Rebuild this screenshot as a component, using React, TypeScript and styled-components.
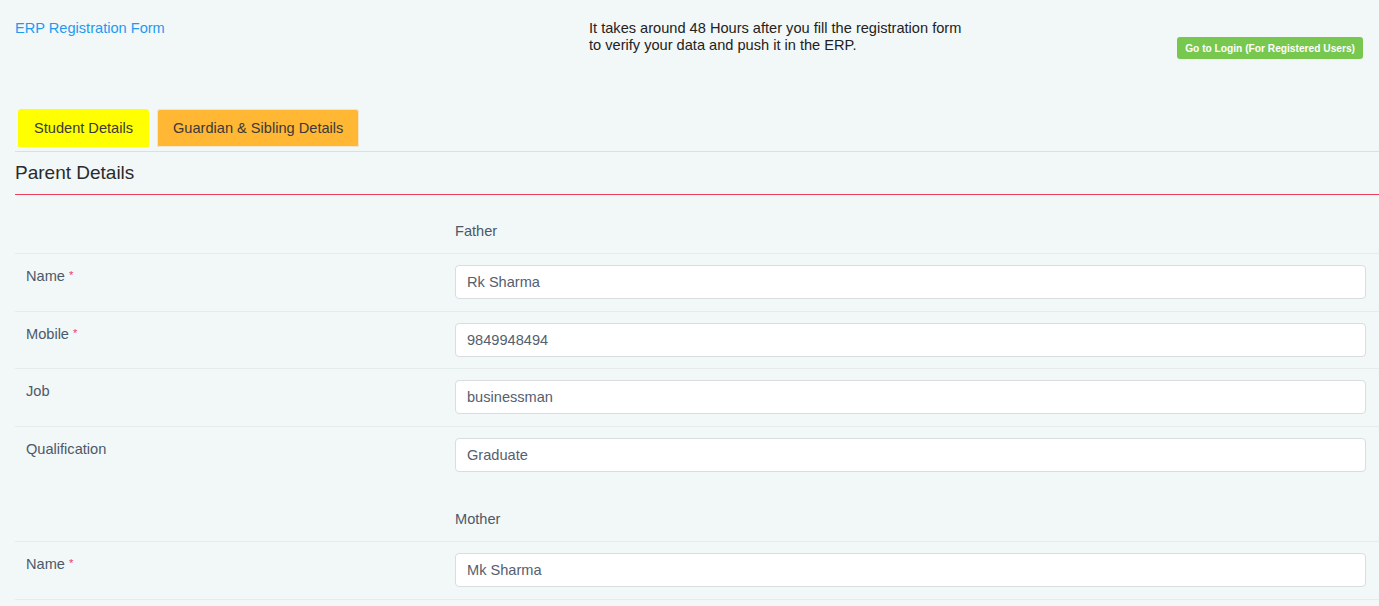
import React from "react";
import styled, { createGlobalStyle } from "styled-components";

const Global = createGlobalStyle`
  html, body { margin: 0; padding: 0; }
  body {
    background: #f2f7f8;
    font-family: "Liberation Sans", Arial, sans-serif;
    font-size: 14.6px;
    color: #333;
  }
`;

const Page = styled.div`
  padding-left: 15px;
  height: 606px;
  overflow: hidden;
`;

const TopBar = styled.header`
  display: grid;
  grid-template-columns: 574px 1fr auto;
  padding: 20px 16px 0 0;
  height: 89px;
  box-sizing: content-box;
`;

const BrandLink = styled.a`
  color: #1d9bf0;
  font-size: 14.6px;
  line-height: 17px;
  text-decoration: none;
`;

const Notice = styled.p`
  margin: 0;
  font-size: 14.6px;
  line-height: 17px;
  color: #222;
`;

const LoginButton = styled.button`
  margin-top: 17px;
  align-self: start;
  height: 22px;
  padding: 0 8px;
  background: #78c74f;
  border: none;
  border-radius: 3px;
  color: #fff;
  font-family: "Liberation Sans", Arial, sans-serif;
  font-size: 10.2px;
  font-weight: bold;
  cursor: pointer;
`;

const Tabs = styled.nav`
  display: flex;
  gap: 8px;
  padding-left: 3px;
  padding-bottom: 4px;
  border-bottom: 1px solid #d9dfe2;
`;

const Tab = styled.button<{ $bg: string; $border?: string }>`
  height: 38px;
  padding: 0 15px;
  background: ${(p) => p.$bg};
  border: 1px solid ${(p) => p.$border || p.$bg};
  border-radius: 3px 3px 0 0;
  font-family: "Liberation Sans", Arial, sans-serif;
  font-size: 14.6px;
  color: #3a3a3a;
  cursor: pointer;
`;

const SectionTitle = styled.h2`
  margin: 0;
  height: 42px;
  display: flex;
  align-items: center;
  font-size: 19px;
  font-weight: normal;
  color: #2b2b2b;
  border-bottom: 1px solid #ee3d5e;
`;

const GroupHeader = styled.div`
  display: grid;
  grid-template-columns: 440px 1fr;
  height: 58px;
  align-items: end;
  padding-bottom: 12px;
  box-sizing: border-box;
  color: #4c5968;
  line-height: 20px;
`;

const Row = styled.div`
  display: grid;
  grid-template-columns: 440px 1fr;
  border-top: 1px solid #e6ecee;
  padding: 11px 13px 11.5px 0;
  &:last-child { border-bottom: 1px solid #e6ecee; }
`;

const Label = styled.label`
  padding: 1px 0 0 11px;
  line-height: 20px;
  color: #4c5968;
`;

const Required = styled.span`
  color: #ee3d5e;
  font-size: 11px;
  position: relative;
  top: -2px;
  margin-left: 4px;
`;

const Input = styled.input`
  height: 34px;
  box-sizing: border-box;
  padding: 0 11px;
  background: #fff;
  border: 1px solid #d8dde0;
  border-radius: 4px;
  font-family: "Liberation Sans", Arial, sans-serif;
  font-size: 14.6px;
  color: #55606e;
  outline: none;
`;

type Field = { label: string; value: string; required?: boolean };

const father: Field[] = [
  { label: "Name", value: "Rk Sharma", required: true },
  { label: "Mobile", value: "9849948494", required: true },
  { label: "Job", value: "businessman" },
  { label: "Qualification", value: "Graduate" },
];

const mother: Field[] = [{ label: "Name", value: "Mk Sharma", required: true }];

const Group = ({ title, fields, last }: { title: string; fields: Field[]; last?: boolean }) => (
  <div>
    <GroupHeader>
      <span />
      <span>{title}</span>
    </GroupHeader>
    {fields.map((f) => (
      <Row key={title + f.label}>
        <Label>
          {f.label}
          {f.required && <Required>*</Required>}
        </Label>
        <Input defaultValue={f.value} />
      </Row>
    ))}
  </div>
);

const FatherGroup = styled.div`
  & > div > div:last-child { border-bottom: none; }
`;

export default function App() {
  return (
    <>
      <Global />
      <Page>
        <TopBar>
          <div>
            <BrandLink href="#">ERP Registration Form</BrandLink>
          </div>
          <Notice>
            It takes around 48 Hours after you fill the registration form
            <br />
            to verify your data and push it in the ERP.
          </Notice>
          <LoginButton>Go to Login (For Registered Users)</LoginButton>
        </TopBar>
        <Tabs>
          <Tab $bg="#ffff00">Student Details</Tab>
          <Tab $bg="#ffb734" $border="#f0e4cc">Guardian &amp; Sibling Details</Tab>
        </Tabs>
        <SectionTitle>Parent Details</SectionTitle>
        <FatherGroup>
          <Group title="Father" fields={father} />
        </FatherGroup>
        <Group title="Mother" fields={mother} />
      </Page>
    </>
  );
}
